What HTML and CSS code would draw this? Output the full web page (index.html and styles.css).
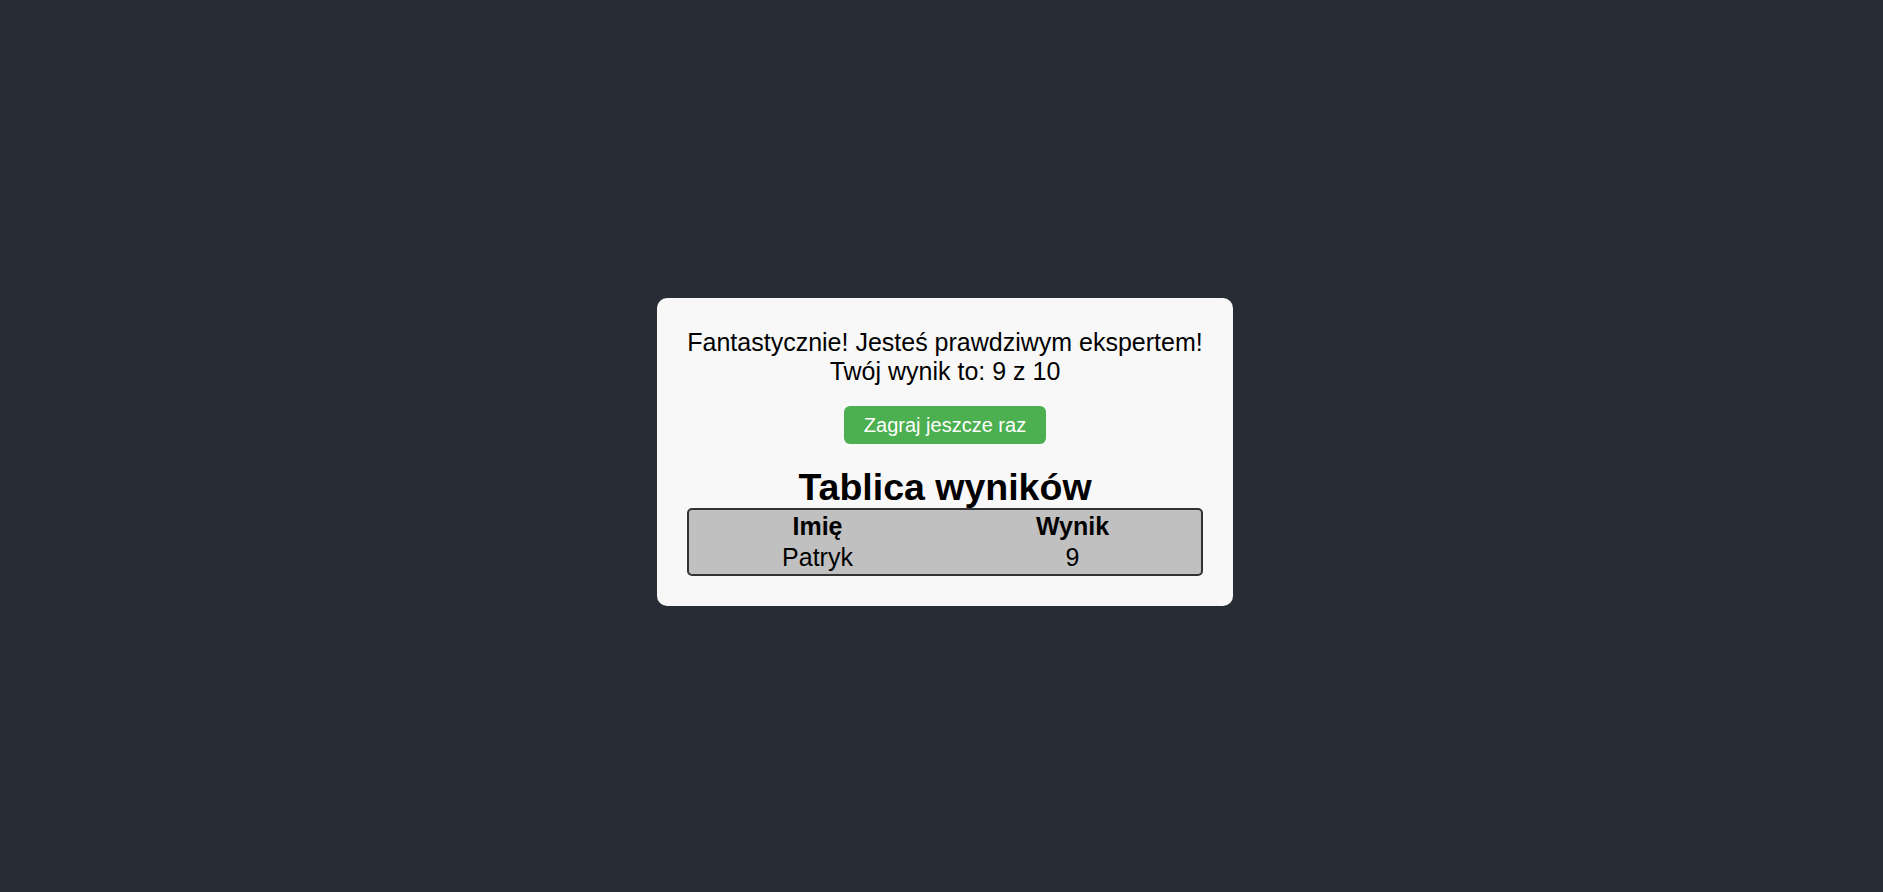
FILE: index.html
```html
<!DOCTYPE html>
<html lang="pl">
<head>
<meta charset="utf-8">
<title>Quiz</title>
<link rel="stylesheet" href="styles.css">
</head>
<body>
<main class="stage">
  <section class="card">
    <p class="result">Fantastycznie! Jesteś prawdziwym ekspertem!<br>Twój wynik to: 9 z 10</p>
    <button class="again" type="button">Zagraj jeszcze raz</button>
    <h2 class="board-title">Tablica wyników</h2>
    <table class="board">
      <thead>
        <tr><th>Imię</th><th>Wynik</th></tr>
      </thead>
      <tbody>
        <tr><td>Patryk</td><td>9</td></tr>
      </tbody>
    </table>
  </section>
</main>
</body>
</html>
```

FILE: styles.css
```css
html, body {
  margin: 0;
  height: 100%;
}

body {
  background: #282c34;
  font-family: "Liberation Sans", Arial, sans-serif;
  color: #000;
}

.stage {
  box-sizing: border-box;
  height: 892px;
  padding: 12px 0 0 7px;
  display: flex;
  align-items: center;
  justify-content: center;
}

.card {
  box-sizing: border-box;
  width: 576px;
  padding: 30px;
  background: #f8f8f8;
  border-radius: 10px;
  display: flex;
  flex-direction: column;
  align-items: center;
  text-align: center;
}

.result {
  margin: 0;
  font-size: 25px;
  line-height: 29px;
  white-space: nowrap;
}

.again {
  margin-top: 20px;
  height: 38px;
  padding: 0 20px;
  border: none;
  border-radius: 6px;
  background: #4caf50;
  color: #fff;
  font-family: "Liberation Sans", Arial, sans-serif;
  font-size: 20px;
  line-height: 23px;
}

.board-title {
  margin: 22px 0 0;
  font-size: 37.5px;
  line-height: 42px;
  font-weight: bold;
}

.board {
  width: 100%;
  border: 2px solid #333;
  border-radius: 5px;
  background: #c0c0c0;
  border-spacing: 2px;
  font-size: 25px;
}

.board th,
.board td {
  width: 50%;
  padding: 0;
  height: 29px;
  line-height: 29px;
  text-align: center;
}
```
